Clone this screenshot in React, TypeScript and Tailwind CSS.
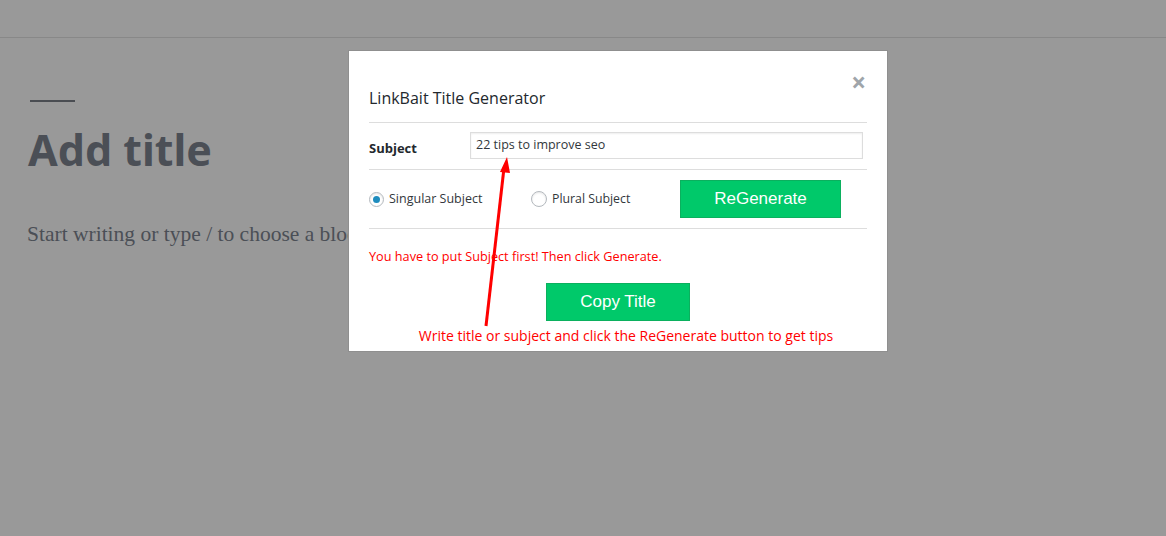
import React from "react";

export default function App() {
  return (
    <div className="relative w-[1166px] h-[536px] overflow-hidden bg-[#999999]" style={{ fontFamily: "'Open Sans', 'Noto Sans', sans-serif" }}>
      {/* header */}
      <div className="h-[38px] border-b border-[#888888]" />
      {/* editor content */}
      <div className="pl-[28px] pt-[62px]">
        <div className="ml-[2px] w-[45px] h-[2px] bg-[#4a4d52]" />
        <div className="mt-[20px] text-[43px] leading-[56px] font-bold text-[#4b4f56]" style={{ fontFamily: "'Noto Sans', 'Open Sans', sans-serif" }}>
          Add title
        </div>
        <div className="mt-[42px] ml-[-1px] text-[21.5px] leading-[28px] text-[#4b4f56]" style={{ fontFamily: "'Liberation Serif', serif" }}>
          Start writing or type / to choose a block
        </div>
      </div>

      {/* modal */}
      <div className="absolute left-[348px] top-[50px] w-[540px] h-[302px] bg-white border border-[#8f8f8f] px-[20px]">
        <div className="relative h-[72px] border-b border-[#dddddd] flex items-end pb-[14px]">
          <span className="text-[16px] leading-[20px] text-[#23282d]">LinkBait Title Generator</span>
          <span className="absolute right-[1px] top-[18px] text-[#a0a5aa] text-[26px] leading-[26px] font-bold">×</span>
        </div>
        <div className="h-[47px] border-b border-[#dddddd] flex items-center">
          <span className="mt-[5px] w-[101px] text-[13px] font-bold text-[#23282d]">Subject</span>
          <div className="mt-[-1px] w-[393px] h-[27px] border border-[#dddddd] flex items-center px-[5px] text-[12.5px] text-[#32373c] shadow-[inset_0_1px_2px_rgba(0,0,0,0.07)]">
            22 tips to improve seo
          </div>
        </div>
        <div className="h-[59px] border-b border-[#dddddd] flex items-center">
          <div className="flex items-center w-[162px]">
            <span className="w-[15px] h-[15px] rounded-full border border-[#b4b9be] flex items-center justify-center shadow-[inset_0_1px_2px_rgba(0,0,0,0.1)]">
              <span className="w-[7px] h-[7px] rounded-full bg-[#1e8cbe]" />
            </span>
            <span className="ml-[5px] text-[12.5px] text-[#32373c]">Singular Subject</span>
          </div>
          <div className="flex items-center w-[149px]">
            <span className="w-[16px] h-[16px] rounded-full border border-[#b4b9be] shadow-[inset_0_1px_2px_rgba(0,0,0,0.1)]" />
            <span className="ml-[5px] text-[12.3px] text-[#32373c]">Plural Subject</span>
          </div>
          <div className="w-[161px] h-[38px] bg-[#00c96a] border border-[#0bb05e] flex items-center justify-center text-white text-[17px]" style={{ fontFamily: "'Liberation Sans', Arial, sans-serif" }}>
            ReGenerate
          </div>
        </div>
        <div className="h-[54px] pt-[2px] flex items-center text-[12.7px] text-[#ff0000]">
          You have to put Subject first! Then click Generate.
        </div>
        <div className="flex justify-center">
          <div className="w-[144px] h-[38px] bg-[#00c96a] border border-[#0bb05e] flex items-center justify-center text-white text-[17px]" style={{ fontFamily: "'Liberation Sans', Arial, sans-serif" }}>
            Copy Title
          </div>
        </div>
        <div className="mt-[6px] text-center text-[14px] leading-[18px] text-[#ff0000] pl-[16px] whitespace-nowrap">
          Write title or subject and click the ReGenerate button to get tips
        </div>
      </div>

      {/* annotation arrow */}
      <svg className="absolute left-0 top-0" width="1166" height="536">
        <line x1="486" y1="326" x2="504" y2="168" stroke="#ff0000" strokeWidth="3" />
        <polygon points="507,157 500,172 510,173" fill="#ff0000" />
      </svg>
    </div>
  );
}
